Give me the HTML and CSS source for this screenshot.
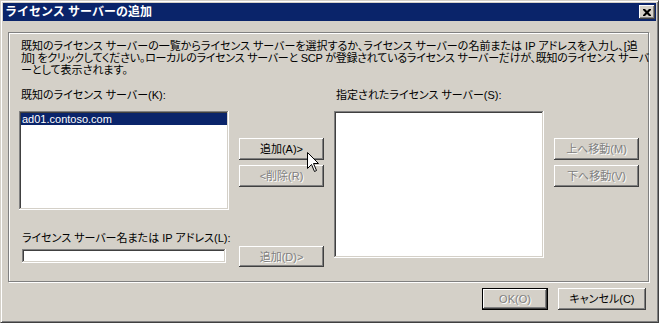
FILE: index.html
```html
<!DOCTYPE html>
<html lang="ja">
<head>
<meta charset="utf-8">
<title>ライセンス サーバーの追加</title>
<link rel="stylesheet" href="styles.css">
</head>
<body>
<div class="window">
  <div class="titlebar">
    <span class="title">ライセンス サーバーの追加</span>
    <div class="close">
      <svg width="8" height="7" viewBox="0 0 8 7"><path d="M0 0h2l2 2l2-2h2v1l-2.5 2.5l2.5 2.5v1h-2l-2-2l-2 2h-2v-1l2.5-2.5l-2.5-2.5z" fill="#000"/></svg>
    </div>
  </div>
  <div class="client">
    <div class="group">
      <p class="desc"><span class="line">既知のライセンス サーバーの一覧からライセンス サーバーを選択するか、ライセンス サーバーの名前または IP アドレスを入力し、[追</span><span class="line line2">加] をクリックしてください。ローカルのライセンス サーバーと SCP が登録されているライセンス サーバーだけが、既知のライセンス サーバ</span><span class="line">ーとして表示されます。</span></p>
      <div class="cols">
        <div class="col">
          <div class="label">既知のライセンス サーバー(K):</div>
          <div class="listbox lb-left"><div class="item sel">ad01.contoso.com</div></div>
          <div class="label label2">ライセンス サーバー名または IP アドレス(L):</div>
          <div class="textbox"></div>
        </div>
        <div class="col btncol">
          <div class="btn">追加(A)&gt;</div>
          <div class="btn disabled">&lt;削除(R)</div>
          <div class="btn disabled add2">追加(D)&gt;</div>
        </div>
        <div class="col">
          <div class="label">指定されたライセンス サーバー(S):</div>
          <div class="listbox lb-right"></div>
        </div>
        <div class="col btncol">
          <div class="btn disabled">上へ移動(M)</div>
          <div class="btn disabled">下へ移動(V)</div>
        </div>
      </div>
    </div>
    <div class="footer">
      <div class="btn default disabled ok">OK(O)</div>
      <div class="btn cancel">キャンセル(C)</div>
    </div>
  </div>
  <svg class="cursor" width="13" height="21" viewBox="0 0 13 21"><path d="M0.5 0.5V16.5L4.5 12.5L7.5 19.5L9.5 18.5L6.5 11.5H11.5Z" fill="#fff" stroke="#000" stroke-width="1" stroke-linejoin="miter"/></svg>
</div>
</body>
</html>
```
FILE: styles.css
```css
* { box-sizing: border-box; }
html, body { margin: 0; padding: 0; background: #d4d0c8; }
body {
  font-family: "Liberation Sans", "Noto Sans CJK JP", sans-serif;
  font-size: 11px;
  line-height: 12px;
  color: #000;
  font-feature-settings: "palt" 1;
}
.window {
  position: relative;
  width: 659px;
  height: 323px;
  background: #d4d0c8;
  border: 1px solid;
  border-color: #d4d0c8 #404040 #404040 #d4d0c8;
  box-shadow: inset 1px 1px #fff, inset -1px -1px #808080;
  padding: 2px;
  display: flex;
  flex-direction: column;
}
.titlebar {
  height: 18px;
  background: #0a246a;
  display: flex;
  align-items: center;
  justify-content: space-between;
  padding-left: 2px;
  padding-right: 1px;
}
.title {
  color: #fff;
  font-weight: bold;
  font-size: 12px;
  line-height: 18px;
  font-feature-settings: normal;
}
.close {
  width: 16px;
  height: 14px;
  background: #d4d0c8;
  box-shadow: inset -1px -1px #404040, inset 1px 1px #fff, inset -2px -2px #808080;
  display: flex;
  align-items: center;
  justify-content: center;
}
.close svg { display: block; margin-left: -1px; }
.client {
  padding: 11px 0 0 5px;
}
.group {
  width: 641px;
  height: 250px;
  border: 1px solid #808080;
  box-shadow: inset 1px 1px #fff, 1px 1px #fff;
  padding: 7px 0 0 10px;
}
.desc {
  margin: 0 0 0 2px;
  white-space: nowrap;
  line-height: 12px;
  display: flex;
  flex-direction: column;
}
.line { display: block; height: 12px; }
.line2 { letter-spacing: -0.25px; }
.cols {
  margin-top: 13px;
  display: grid;
  grid-template-columns: 210px 85px 210px 85px;
  column-gap: 10px;
  align-items: start;
}
.col { display: flex; flex-direction: column; }
.label { margin-left: 2px; height: 12px; white-space: nowrap; }
.listbox {
  margin-top: 10px;
  background: #fff;
  box-shadow: inset -1px -1px #fff, inset 1px 1px #808080, inset -2px -2px #d4d0c8, inset 2px 2px #404040;
  padding: 2px;
}
.lb-left { height: 99px; }
.lb-right { height: 147px; }
.item {
  height: 12px;
  line-height: 12px;
  padding-left: 1px;
  font-size: 11px;
}
.item.sel { background: #0a246a; color: #fff; }
.label2 { margin-top: 22px; margin-left: 3px; }
.textbox {
  margin-top: 5px;
  margin-left: 3px;
  width: 204px;
  height: 14px;
  background: #fff;
  box-shadow: inset -1px -1px #fff, inset 1px 1px #808080, inset -2px -2px #d4d0c8, inset 2px 2px #404040;
}
.btncol { padding-top: 49px; gap: 5px; }
.btn {
  height: 22px;
  display: flex;
  align-items: center;
  justify-content: center;
  background: #d4d0c8;
  box-shadow: inset -1px -1px #404040, inset 1px 1px #fff, inset -2px -2px #808080;
  white-space: nowrap;
}
.btn.disabled { color: #808080; text-shadow: 1px 1px #fff; }
.btn.add2 { margin-top: 54px; height: 21px; }
.footer {
  display: flex;
  justify-content: flex-end;
  gap: 10px;
  margin-top: 6px;
  padding-right: 10px;
}
.ok { width: 66px; }
.cancel { width: 88px; }
.btn.default {
  border: 1px solid #000;
  box-shadow: inset -1px -1px #404040, inset 1px 1px #fff, inset -2px -2px #808080;
}
.cursor {
  position: absolute;
  left: 306px;
  top: 151px;
}
```
